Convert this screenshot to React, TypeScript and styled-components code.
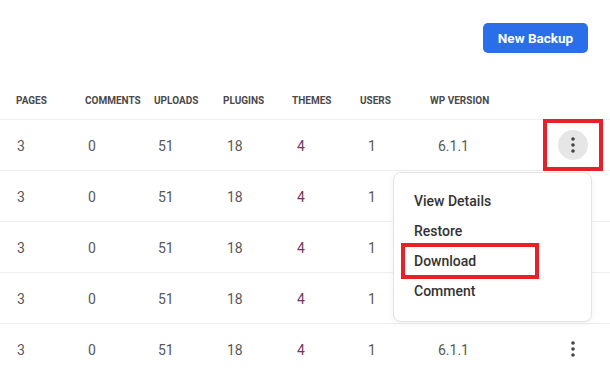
import styled, { createGlobalStyle } from 'styled-components';

const GlobalStyle = createGlobalStyle`
  body {
    margin: 0;
    background: #ffffff;
    font-family: Roboto, "Liberation Sans", Arial, sans-serif;
  }
`;

const columns = [
  { key: 'pages', label: 'Pages', indent: 1 },
  { key: 'comments', label: 'Comments', indent: 3 },
  { key: 'uploads', label: 'Uploads', indent: 4 },
  { key: 'plugins', label: 'Plugins', indent: 4 },
  { key: 'themes', label: 'Themes', indent: 5 },
  { key: 'users', label: 'Users', indent: 8 },
  { key: 'version', label: 'WP Version', indent: 8 },
];

const rows = Array.from({ length: 5 }, () => ({
  pages: '3',
  comments: '0',
  uploads: '51',
  plugins: '18',
  themes: '4',
  users: '1',
  version: '6.1.1',
}));

const menuItems = ['View Details', 'Restore', 'Download', 'Comment'];

function Kebab() {
  return (
    <svg width="6" height="18" viewBox="0 0 6 18">
      <circle cx="3" cy="3" r="1.8" fill="#444" />
      <circle cx="3" cy="9" r="1.8" fill="#444" />
      <circle cx="3" cy="15" r="1.8" fill="#444" />
    </svg>
  );
}

export default function App() {
  return (
    <Page>
      <GlobalStyle />
      <Toolbar>
        <PrimaryButton>New Backup</PrimaryButton>
      </Toolbar>
      <Table>
        <HeaderRow>
          {columns.map((c) => (
            <HeadCell key={c.key}>{c.label}</HeadCell>
          ))}
          <HeadCell />
        </HeaderRow>
        {rows.map((r, i) => (
          <Row key={i}>
            {columns.map((c) => (
              <Cell key={c.key} $indent={c.indent} $accent={c.key === 'themes'}>
                {r[c.key as keyof typeof r]}
              </Cell>
            ))}
            <ActionCell $marked={i === 0}>
              <KebabButton $active={i === 0}>
                <Kebab />
              </KebabButton>
            </ActionCell>
          </Row>
        ))}
      </Table>
      <Menu>
        {menuItems.map((m) => (
          <MenuItem key={m} $marked={m === 'Download'}>
            {m}
          </MenuItem>
        ))}
      </Menu>
    </Page>
  );
}

const Page = styled.div`
  position: relative;
  width: 610px;
  height: 371px;
  overflow: hidden;
  background: #fff;
`;

const Toolbar = styled.div`
  display: flex;
  justify-content: flex-end;
  align-items: flex-start;
  height: 82px;
  padding: 23px 22px 0 0;
  box-sizing: border-box;
`;

const PrimaryButton = styled.button`
  width: 105px;
  height: 30px;
  border: none;
  border-radius: 5px;
  background: #2a6fe9;
  color: #fff;
  font-family: Roboto, "Liberation Sans", Arial, sans-serif;
  font-size: 13.5px;
  font-weight: 700;
  cursor: pointer;
`;

const Table = styled.div`
  display: flex;
  flex-direction: column;
`;

const gridCols = '69px 69px 69px 69px 68px 70px 113px 60px';

const HeaderRow = styled.div`
  display: grid;
  grid-template-columns: ${gridCols};
  padding-left: 16px;
  height: 38px;
  align-items: center;
  border-bottom: 1px solid #eeeeee;
  box-sizing: border-box;
`;

const HeadCell = styled.div`
  font-size: 10px;
  font-weight: 700;
  text-transform: uppercase;
  color: #4a4a4a;
  white-space: nowrap;
`;

const Row = styled.div`
  display: grid;
  grid-template-columns: ${gridCols};
  padding-left: 16px;
  height: 51px;
  align-items: stretch;
  border-bottom: 1px solid #eeeeee;
  box-sizing: border-box;
`;

const Cell = styled.div<{ $indent: number; $accent?: boolean }>`
  display: flex;
  align-items: center;
  padding: 1px 0 0 ${(p) => p.$indent}px;
  font-size: 14px;
  color: ${(p) => (p.$accent ? '#74385a' : '#585858')};
`;

const ActionCell = styled.div<{ $marked?: boolean }>`
  display: flex;
  align-items: center;
  justify-content: center;
  margin: -1px 0 0;
  border: 4px solid ${(p) => (p.$marked ? '#e8202a' : 'transparent')};
  box-sizing: border-box;
  height: 52px;
`;

const KebabButton = styled.div<{ $active?: boolean }>`
  width: 30px;
  height: 30px;
  border-radius: 50%;
  background: ${(p) => (p.$active ? '#e6e6e6' : 'transparent')};
  display: flex;
  align-items: center;
  justify-content: center;
`;

const Menu = styled.div`
  position: absolute;
  left: 393px;
  top: 172px;
  width: 199px;
  padding: 13px 0 15px;
  box-sizing: border-box;
  background: #fff;
  border: 1px solid #e4e4e4;
  border-radius: 8px;
  box-shadow: 0 2px 6px rgba(0, 0, 0, 0.06);
`;

const MenuItem = styled.div<{ $marked?: boolean }>`
  position: relative;
  height: 30px;
  display: flex;
  align-items: center;
  padding-left: 20px;
  font-size: 14px;
  font-weight: 500;
  color: #333;

  &::after {
    content: '';
    display: ${(p) => (p.$marked ? 'block' : 'none')};
    position: absolute;
    left: 7px;
    top: -3px;
    width: 138px;
    height: 36px;
    border: 4px solid #e8202a;
    box-sizing: border-box;
  }
`;
